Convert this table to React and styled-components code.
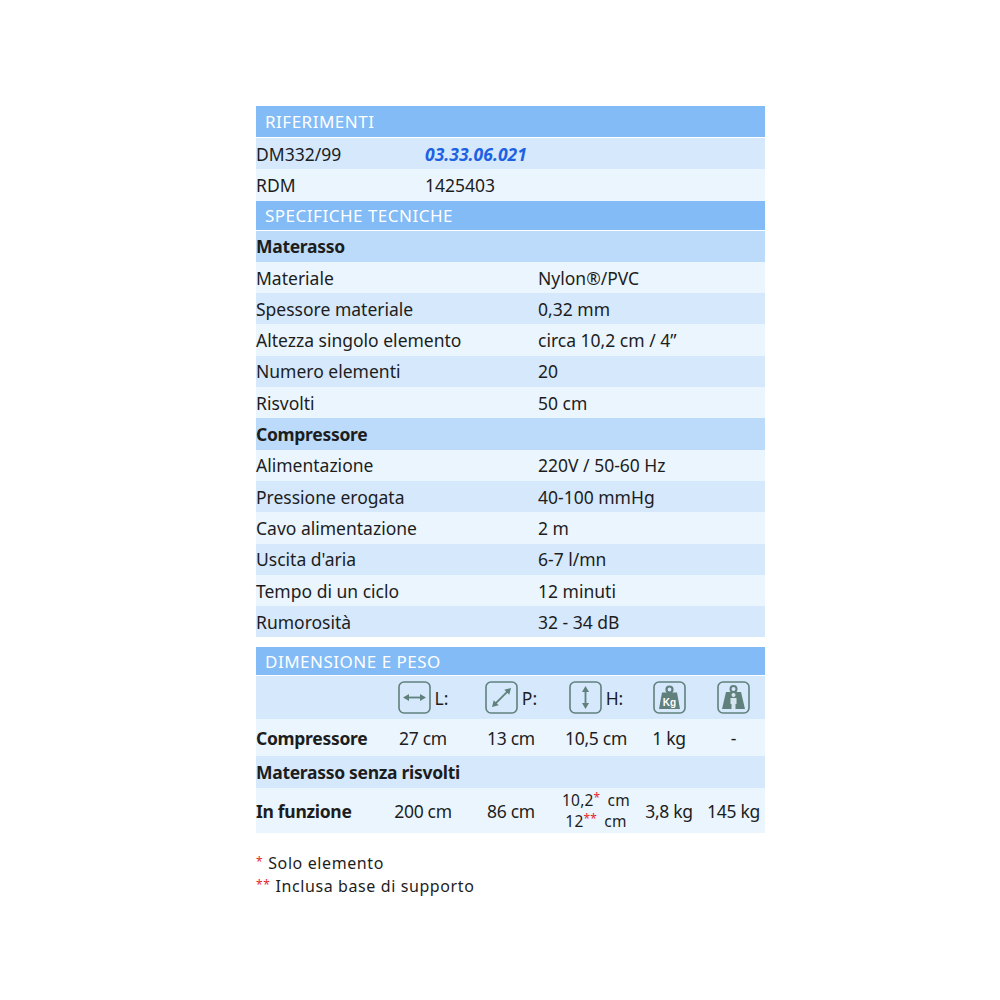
import React from "react";
import styled, { createGlobalStyle } from "styled-components";

const GlobalStyle = createGlobalStyle`
  body {
    margin: 0;
    background: #ffffff;
    font-family: "Noto Sans", "DejaVu Sans", sans-serif;
    color: #1d1d1d;
  }
`;

const Page = styled.div`
  padding: 106px 0 0 256px;
`;

const Sheet = styled.div`
  width: 509px;
  display: flex;
  flex-direction: column;
`;

const SectionHeader = styled.div`
  height: ${(p) => p.$h || 31}px;
  margin-top: ${(p) => p.$gap || 0}px;
  background: #82bbf5;
  color: #ffffff;
  font-size: 17px;
  letter-spacing: 0.5px;
  display: flex;
  align-items: center;
  padding-left: 9px;
  text-transform: uppercase;
  border-bottom: 1px solid #ffffff;
  box-sizing: border-box;
`;

const Row = styled.div`
  height: 31.3px;
  display: grid;
  grid-template-columns: ${(p) => p.$cols || "282px 1fr"};
  align-items: center;
  font-size: 17.5px;
  background: ${(p) =>
    p.$tone === "sub" ? "#bcdbfa" : p.$tone === "light" ? "#d5e8fc" : "#eaf5fe"};
  font-weight: ${(p) => (p.$tone === "sub" ? 700 : 400)};
  letter-spacing: ${(p) => (p.$tone === "sub" ? "-0.3px" : "0")};
`;

const Code = styled.span`
  color: #1d62e3;
  font-weight: 700;
  font-style: italic;
`;

const DimGrid = styled.div`
  display: grid;
  grid-template-columns: 124px 86px 90px 80px 66px 63px;
  align-items: center;
  height: ${(p) => p.$h}px;
  font-size: 17.5px;
  background: ${(p) =>
    p.$tone === "sub" ? "#cbe2fb" : p.$tone === "light" ? "#d5e8fc" : "#eaf5fe"};
`;

const Label = styled.div`
  font-weight: 700;
  letter-spacing: -0.3px;
  white-space: nowrap;
  grid-column: ${(p) => (p.$wide ? "1 / -1" : "auto")};
`;

const Cell = styled.div`
  text-align: center;
  letter-spacing: -0.3px;
  white-space: nowrap;
`;

const StackCell = styled.div`
  text-align: center;
  font-size: 15.5px;
  line-height: 21px;
  letter-spacing: 0.2px;
  white-space: nowrap;
`;

const IconGroup = styled.div`
  display: flex;
  align-items: center;
  justify-content: center;
  gap: 4px;
  font-size: 17.5px;
`;

const Star = styled.sup`
  color: #e8252d;
  font-size: 12px;
  vertical-align: 4px;
  line-height: 0;
  margin-right: 3px;
`;

const Notes = styled.div`
  margin-top: 18px;
  font-size: 16px;
  letter-spacing: 0.6px;
  line-height: 22px;
`;

const NoteStar = styled.span`
  color: #e8252d;
  font-size: 12px;
  vertical-align: 3px;
  margin-right: 5px;
`;

const IconBox = ({ children }) => (
  <svg width="33" height="33" viewBox="0 0 33 33">
    <rect x="1" y="1" width="31" height="31" rx="5" fill="none" stroke="#60807c" strokeWidth="1.6" />
    {children}
  </svg>
);

const Arrow = ({ x1, y1, x2, y2 }) => {
  const dx = x2 - x1;
  const dy = y2 - y1;
  const len = Math.hypot(dx, dy);
  const ux = dx / len;
  const uy = dy / len;
  const head = (px, py, sx) => {
    const bx = px - ux * 6 * sx;
    const by = py - uy * 6 * sx;
    return `${px},${py} ${bx - uy * 3.5},${by + ux * 3.5} ${bx + uy * 3.5},${by - ux * 3.5}`;
  };
  return (
    <g fill="#60807c" stroke="#60807c">
      <line x1={x1 + ux * 4} y1={y1 + uy * 4} x2={x2 - ux * 4} y2={y2 - uy * 4} strokeWidth="1.8" />
      <polygon points={head(x2, y2, 1)} stroke="none" />
      <polygon points={head(x1, y1, -1)} stroke="none" />
    </g>
  );
};

const KgIcon = () => (
  <IconBox>
    <circle cx="16.5" cy="8.5" r="3" fill="none" stroke="#60807c" strokeWidth="2.2" />
    <path d="M9 11.5 H24 L27 28 H6 Z" fill="#60807c" />
    <text x="16.5" y="25" textAnchor="middle" fontSize="10" fontWeight="700" fill="#ffffff" fontFamily="Liberation Sans, sans-serif">
      Kg
    </text>
  </IconBox>
);

const PersonIcon = () => (
  <IconBox>
    <circle cx="16.5" cy="8" r="3" fill="none" stroke="#60807c" strokeWidth="2" />
    <path d="M9 11 H24 L28 28 H5 Z" fill="#60807c" />
    <circle cx="16.5" cy="14" r="2" fill="#d6e6f0" />
    <path d="M13.5 17 H19.5 V23 H18.5 V28 H14.5 V23 H13.5 Z" fill="#d6e6f0" />
  </IconBox>
);

const specs = [
  { tone: "sub", label: "Materasso" },
  { label: "Materiale", value: "Nylon®/PVC" },
  { tone: "light", label: "Spessore materiale", value: "0,32 mm" },
  { label: "Altezza singolo elemento", value: "circa 10,2 cm / 4”" },
  { tone: "light", label: "Numero elementi", value: "20" },
  { label: "Risvolti", value: "50 cm" },
  { tone: "sub", label: "Compressore" },
  { label: "Alimentazione", value: "220V / 50-60 Hz" },
  { tone: "light", label: "Pressione erogata", value: "40-100 mmHg" },
  { label: "Cavo alimentazione", value: "2 m" },
  { tone: "light", label: "Uscita d'aria", value: "6-7 l/mn" },
  { label: "Tempo di un ciclo", value: "12 minuti" },
  { tone: "light", label: "Rumorosità", value: "32 - 34 dB" },
];

export default function App() {
  return (
    <Page>
      <GlobalStyle />
      <Sheet>
        <SectionHeader $h={32}>Riferimenti</SectionHeader>
        <Row $tone="light" $cols="169px 1fr">
          <span>DM332/99</span>
          <Code>03.33.06.021</Code>
        </Row>
        <Row $cols="169px 1fr">
          <span>RDM</span>
          <span>1425403</span>
        </Row>
        <SectionHeader $h={30}>Specifiche tecniche</SectionHeader>
        {specs.map((s) => (
          <Row key={s.label} $tone={s.tone}>
            <span>{s.label}</span>
            <span>{s.value}</span>
          </Row>
        ))}
        <SectionHeader $h={29} $gap={10}>Dimensione e peso</SectionHeader>
        <DimGrid $h={43} $tone="light">
          <div />
          <IconGroup>
            <IconBox>
              <Arrow x1={5} y1={16.5} x2={28} y2={16.5} />
            </IconBox>
            L:
          </IconGroup>
          <IconGroup>
            <IconBox>
              <Arrow x1={7} y1={26} x2={26} y2={7} />
            </IconBox>
            P:
          </IconGroup>
          <IconGroup>
            <IconBox>
              <Arrow x1={16.5} y1={5} x2={16.5} y2={28} />
            </IconBox>
            H:
          </IconGroup>
          <IconGroup>
            <KgIcon />
          </IconGroup>
          <IconGroup>
            <PersonIcon />
          </IconGroup>
        </DimGrid>
        <DimGrid $h={37}>
          <Label>Compressore</Label>
          <Cell>27 cm</Cell>
          <Cell>13 cm</Cell>
          <Cell>10,5 cm</Cell>
          <Cell>1 kg</Cell>
          <Cell>-</Cell>
        </DimGrid>
        <DimGrid $h={32} $tone="light">
          <Label $wide>Materasso senza risvolti</Label>
        </DimGrid>
        <DimGrid $h={45}>
          <Label>In funzione</Label>
          <Cell>200 cm</Cell>
          <Cell>86 cm</Cell>
          <StackCell>
            10,2<Star>*</Star> cm
            <br />
            12<Star>**</Star> cm
          </StackCell>
          <Cell>3,8 kg</Cell>
          <Cell>145 kg</Cell>
        </DimGrid>
      </Sheet>
      <Notes>
        <div>
          <NoteStar>*</NoteStar>Solo elemento
        </div>
        <div>
          <NoteStar>**</NoteStar>Inclusa base di supporto
        </div>
      </Notes>
    </Page>
  );
}
